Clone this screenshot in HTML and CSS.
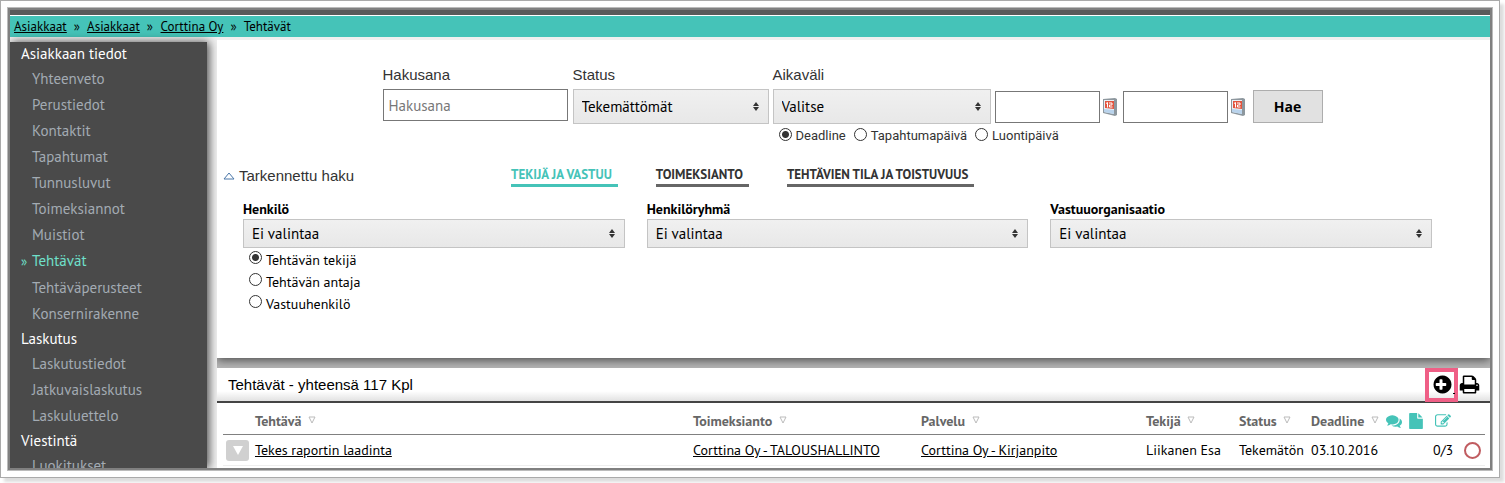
FILE: index.html
```
<!DOCTYPE html>
<html lang="fi">
<head>
    <meta charset="UTF-8">
    <meta name="viewport" content="width=device-width, initial-scale=1.0">
    <title>Tehtävät - Corttina Oy</title>
    <link rel="stylesheet" href="styles.css">
</head>
<body>
    <div class="frame">
        <div class="app">
            <nav class="breadcrumb" aria-label="Murupolku">
                <a href="#">Asiakkaat</a><span>»</span>
                <a href="#">Asiakkaat</a><span>»</span>
                <a href="#">Corttina Oy</a><span>»</span>
                Tehtävät
            </nav>

            <div class="content">
                <nav class="sidebar">
                    <h2>Asiakkaan tiedot</h2>
                    <ul>
                        <li><a href="#">Yhteenveto</a></li>
                        <li><a href="#">Perustiedot</a></li>
                        <li><a href="#">Kontaktit</a></li>
                        <li><a href="#">Tapahtumat</a></li>
                        <li><a href="#">Tunnusluvut</a></li>
                        <li><a href="#">Toimeksiannot</a></li>
                        <li><a href="#">Muistiot</a></li>
                        <li class="active"><a href="#">Tehtävät</a></li>
                        <li><a href="#">Tehtäväperusteet</a></li>
                        <li><a href="#">Konsernirakenne</a></li>
                    </ul>
                    <h2>Laskutus</h2>
                    <ul>
                        <li><a href="#">Laskutustiedot</a></li>
                        <li><a href="#">Jatkuvaislaskutus</a></li>
                        <li><a href="#">Laskuluettelo</a></li>
                    </ul>
                    <h2>Viestintä</h2>
                    <ul>
                        <li><a href="#">Luokitukset</a></li>
                    </ul>
                </nav>

                <main class="main">
                    <form class="filters">
                        <div class="search">
                            <div class="field field-word">
                                <label for="hakusana">Hakusana</label>
                                <input type="text" id="hakusana" placeholder="Hakusana">
                            </div>
                            <div class="field field-status">
                                <label for="status">Status</label>
                                <div class="select">
                                    <select id="status"><option>Tekemättömät</option></select>
                                </div>
                            </div>
                            <div class="field field-range">
                                <label for="aikavali">Aikaväli</label>
                                <div class="select">
                                    <select id="aikavali"><option>Valitse</option></select>
                                </div>
                                <div class="date-type">
                                    <label><input type="radio" name="pvm" checked>Deadline</label>
                                    <label><input type="radio" name="pvm">Tapahtumapäivä</label>
                                    <label><input type="radio" name="pvm">Luontipäivä</label>
                                </div>
                            </div>
                            <div class="dates">
                                <input type="text" aria-label="Alkupäivä">
                                <button type="button" class="calendar" aria-label="Valitse alkupäivä">
                                    <svg width="14" height="18" viewBox="0 0 14 18">
                                        <path d="M0 1l12-1 2 1v16l-2 1-12-3z" fill="#8d979e"/>
                                        <path d="M1 2h10v14L1 14z" fill="#e9f0f6"/>
                                        <path d="M1 11l10 1v4L1 14z" fill="#b9d3ec"/>
                                        <path d="M2 3h9v8l-9-1z" fill="#e2553f"/>
                                        <path d="M3 5.500l1.500-1V9.500M6 5h3v2H6.500v2H9.500" fill="none" stroke="#fff"/>
                                    </svg>
                                </button>
                                <input type="text" aria-label="Loppupäivä">
                                <button type="button" class="calendar" aria-label="Valitse loppupäivä">
                                    <svg width="14" height="18" viewBox="0 0 14 18">
                                        <path d="M0 1l12-1 2 1v16l-2 1-12-3z" fill="#8d979e"/>
                                        <path d="M1 2h10v14L1 14z" fill="#e9f0f6"/>
                                        <path d="M1 11l10 1v4L1 14z" fill="#b9d3ec"/>
                                        <path d="M2 3h9v8l-9-1z" fill="#e2553f"/>
                                        <path d="M3 5.500l1.500-1V9.500M6 5h3v2H6.500v2H9.500" fill="none" stroke="#fff"/>
                                    </svg>
                                </button>
                                <button type="submit" class="submit">Hae</button>
                            </div>
                        </div>

                        <div class="advanced">
                            <button type="button" class="toggle">
                                <svg width="12" height="8" viewBox="0 0 12 8"><path d="M1 7L6 1l5 6z" fill="#fff" stroke="#4a76a8"/></svg>
                                Tarkennettu haku
                            </button>
                            <div class="tabs">
                                <button type="button" class="tab selected">TEKIJÄ JA VASTUU</button>
                                <button type="button" class="tab">TOIMEKSIANTO</button>
                                <button type="button" class="tab">TEHTÄVIEN TILA JA TOISTUVUUS</button>
                            </div>
                        </div>

                        <div class="owners">
                            <div>
                                <label class="owner-label" for="henkilo">Henkilö</label>
                                <div class="select">
                                    <select id="henkilo"><option>Ei valintaa</option></select>
                                </div>
                                <div class="roles">
                                    <label><input type="radio" name="rooli" checked>Tehtävän tekijä</label>
                                    <label><input type="radio" name="rooli">Tehtävän antaja</label>
                                    <label><input type="radio" name="rooli">Vastuuhenkilö</label>
                                </div>
                            </div>
                            <div>
                                <label class="owner-label" for="ryhma">Henkilöryhmä</label>
                                <div class="select">
                                    <select id="ryhma"><option>Ei valintaa</option></select>
                                </div>
                            </div>
                            <div>
                                <label class="owner-label" for="organisaatio">Vastuuorganisaatio</label>
                                <div class="select">
                                    <select id="organisaatio"><option>Ei valintaa</option></select>
                                </div>
                            </div>
                        </div>
                    </form>

                    <section class="tasks">
                        <header class="tasks-head">
                            <h1>Tehtävät - yhteensä 117 Kpl</h1>
                            <a href="#" class="add" aria-label="Lisää tehtävä">
                                <svg width="21" height="21" viewBox="0 0 1792 1792"><path d="M1216 960v-128q0-26-19-45t-45-19h-256v-256q0-26-19-45t-45-19h-128q-26 0-45 19t-19 45v256h-256q-26 0-45 19t-19 45v128q0 26 19 45t45 19h256v256q0 26 19 45t45 19h128q26 0 45-19t19-45v-256h256q26 0 45-19t19-45zm448-64q0 209-103 385.500t-279.500 279.500-385.500 103-385.500-103-279.500-279.500-103-385.500 103-385.500 279.500-279.500 385.500-103 385.500 103 279.500 279.500 103 385.500z"/></svg>
                                <span></span>
                            </a>
                            <a href="#" class="print" aria-label="Tulosta">
                                <svg width="21" height="21" viewBox="0 0 1792 1792"><path d="M448 1536h896v-256h-896v256zm0-640h896v-384h-160q-40 0-68-28t-28-68v-160h-640v640zm1152 64q0-26-19-45t-45-19-45 19-19 45 19 45 45 19 45-19 19-45zm128 0v416q0 13-9.500 22.500t-22.500 9.500h-224v160q0 40-28 68t-68 28h-960q-40 0-68-28t-28-68v-160h-224q-13 0-22.500-9.500t-9.500-22.500v-416q0-79 56.500-135.500t135.500-56.500h64v-544q0-40 28-68t68-28h672q40 0 88 20t76 48l152 152q28 28 48 76t20 88v256h64q79 0 135.500 56.500t56.500 135.500z"/></svg>
                            </a>
                        </header>

                        <table>
                            <colgroup>
                                <col class="c-open"><col><col class="c-order"><col class="c-service"><col class="c-author"><col class="c-status"><col class="c-deadline"><col class="c-chat"><col class="c-file"><col class="c-edit"><col class="c-state">
                            </colgroup>
                            <thead>
                                <tr>
                                    <th></th>
                                    <th>Tehtävä <svg class="sort" viewBox="0 0 8 8"><path d="M1 1h6L4 7z"/></svg></th>
                                    <th>Toimeksianto <svg class="sort" viewBox="0 0 8 8"><path d="M1 1h6L4 7z"/></svg></th>
                                    <th>Palvelu <svg class="sort" viewBox="0 0 8 8"><path d="M1 1h6L4 7z"/></svg></th>
                                    <th>Tekijä <svg class="sort" viewBox="0 0 8 8"><path d="M1 1h6L4 7z"/></svg></th>
                                    <th>Status <svg class="sort" viewBox="0 0 8 8"><path d="M1 1h6L4 7z"/></svg></th>
                                    <th>Deadline <svg class="sort" viewBox="0 0 8 8"><path d="M1 1h6L4 7z"/></svg></th>
                                    <th><svg class="icon" viewBox="0 0 1792 1792"><path d="M1408 768q0 139-94 257t-256.500 186.500-353.500 68.500q-86 0-176-16-124 88-278 128-36 9-86 16h-3q-11 0-20.500-8t-11.500-21q-1-3-1-6.500t.5-6.500 2-6l2.500-5 3.500-5.500 4-5 4.500-5 4-4.500q5-6 23-25t26-29.500 22.500-29 25-38.500 20.500-44q-124-72-195-177t-71-224q0-139 94-257t256.500-186.500 353.500-68.500 353.500 68.500 256.500 186.500 94 257zm384 256q0 120-71 224.500t-195 176.500q10 24 20.500 44t25 38.500 22.500 29 26 29.500 23 25q1 1 4 4.500t4.500 5 4 5 3.500 5.500l2.500 5 2 6 .5 6.500-1 6.500q-3 14-13 22t-22 7q-50-7-86-16-154-40-278-128-90 16-176 16-271 0-472-132 58 4 88 4 161 0 309-45t264-129q125-92 192-212t67-254q0-77-23-152 129 71 204 178t75 230z"/></svg></th>
                                    <th><svg class="icon" viewBox="0 0 1792 1792"><path d="M1152 512v-472q22 14 36 28l408 408q14 14 28 36h-472zm-128 32q0 40 28 68t68 28h544v1056q0 40-28 68t-68 28h-1344q-40 0-68-28t-28-68v-1600q0-40 28-68t68-28h800v544z"/></svg></th>
                                    <th><svg class="icon icon-edit" viewBox="0 0 1792 1792"><path d="M888 1184l116-116-152-152-116 116v56h96v96h56zm440-720q-16-16-33 1l-350 350q-17 17-1 33t33-1l350-350q17-17 1-33zm80 594v190q0 119-84.500 203.500t-203.500 84.500h-832q-119 0-203.500-84.500t-84.500-203.500v-832q0-119 84.500-203.500t203.500-84.500h832q63 0 117 25 15 7 18 23 3 17-9 29l-49 49q-14 14-32 8-23-6-45-6h-832q-66 0-113 47t-47 113v832q0 66 47 113t113 47h832q66 0 113-47t47-113v-126q0-13 9-22l64-64q15-15 35-7t20 29zm-96-738l288 288-672 672h-288v-288zm444 132l-92 92-288-288 92-92q28-28 68-28t68 28l152 152q28 28 28 68t-28 68z"/></svg></th>
                                    <th></th>
                                </tr>
                            </thead>
                            <tbody>
                                <tr>
                                    <td><button type="button" class="open" aria-label="Avaa"><svg width="10" height="9" viewBox="0 0 10 9"><path d="M0 0h10L5 9z" fill="#fff"/></svg></button></td>
                                    <td><a href="#">Tekes raportin laadinta</a></td>
                                    <td><a href="#">Corttina Oy - TALOUSHALLINTO</a></td>
                                    <td><a href="#">Corttina Oy - Kirjanpito</a></td>
                                    <td>Liikanen Esa</td>
                                    <td>Tekemätön</td>
                                    <td>03.10.2016</td>
                                    <td></td>
                                    <td></td>
                                    <td class="count">0/3</td>
                                    <td><span class="state"></span></td>
                                </tr>
                            </tbody>
                        </table>
                    </section>
                </main>
            </div>
        </div>
    </div>
</body>
</html>
```
FILE: styles.css
```
* {
    box-sizing: border-box;
}
body {
    margin: 0;
    padding: 0 5px 5px 0;
    height: 100vh;
    background-color: #fff;
    color: #000;
    font-family: "PT Sans", Lato, sans-serif;
    font-size: 14px;
    overflow: hidden;
}
input, select, button {
    font-family: inherit;
    color: inherit;
    margin: 0;
}
a {
    color: inherit;
}

/* kehys */
.frame {
    height: 100%;
    padding: 7px;
    border: 1px solid #aaa;
    background-color: #fff;
    box-shadow: 4px 4px 3px #ddd;
}
.app {
    height: 100%;
    display: flex;
    flex-direction: column;
    border: 2px solid #808080;
    box-shadow: 0 0 0 1px #bbb;
    overflow: hidden;
}
.breadcrumb {
    flex: none;
    border-top: 5px solid #5a5a5a;
    box-shadow: inset 0 1px #fff;
    background-color: #45c3b8;
    padding: 2px 4px 0;
    height: 27px;
    font-size: 13px;
    line-height: 20px;
}
.breadcrumb span {
    margin: 0 4px 0 7px;
}
.content {
    flex: 1;
    min-height: 0;
    display: flex;
    background-color: #f0f0f0;
}

/* sivuvalikko */
.sidebar {
    flex: none;
    width: 197px;
    margin: 5px 10px 0 0;
    background-color: #4a4a4a;
    box-shadow: 2px 0 9px rgba(0, 0, 0, 0.7);
}
.sidebar h2 {
    margin: 0;
    padding-left: 11px;
    font-size: 15px;
    font-weight: normal;
    line-height: 24px;
    color: #fff;
}
.sidebar ul {
    list-style: none;
    margin: 0;
    padding: 0 0 0 22px;
}
.sidebar li {
    font-size: 15px;
    line-height: 26px;
    color: #a3abb3;
}
.sidebar a {
    text-decoration: none;
}
.sidebar .active {
    color: #6fe0cb;
    margin-left: -11px;
}
.sidebar .active::before {
    content: "»";
    display: inline-block;
    width: 11px;
    font-size: 13px;
}

/* haku */
.main {
    flex: 1;
    min-width: 0;
    border-top: 3px solid #f0f0f0;
    background-color: #b5b5b5;
    overflow: hidden;
}
.filters {
    height: 318px;
    padding-top: 25px;
    background-color: #fff;
    box-shadow: 0 2px 9px rgba(0, 0, 0, 0.6);
}
.search {
    display: flex;
    justify-content: center;
    gap: 4px;
    padding-right: 2px;
    color: #333;
}
.field > label {
    display: block;
    font: 15px/20px "Liberation Sans", Arial, sans-serif;
    margin-bottom: 4px;
}
.field-word {
    width: 186px;
}
.field-status {
    width: 196px;
}
.field-range {
    width: 218px;
}
input[type="text"] {
    width: 100%;
    height: 32px;
    padding: 0 5px;
    border: 1px solid #777;
    background-color: #fff;
    font-size: 15px;
}
.field-word input {
    width: 185px;
}
input::placeholder {
    color: #777;
    opacity: 1;
}
.select {
    position: relative;
}
.select select {
    display: block;
    appearance: none;
    width: 100%;
    height: 35px;
    padding: 0 8px 1px;
    border: 1px solid #c4c4c4;
    border-radius: 0;
    background: linear-gradient(#f0f0f0, #e8e8e8);
    color: #000;
    font-size: 15px;
}
.select::before, .select::after {
    content: "";
    position: absolute;
    right: 10px;
    border: 3px solid transparent;
}
.select::before {
    bottom: 50%;
    border-top: 0;
    border-bottom: 4px solid #333;
    margin-bottom: 1px;
}
.select::after {
    top: 50%;
    border-bottom: 0;
    border-top: 4px solid #333;
}
.date-type {
    display: flex;
    gap: 8px;
    padding: 2px 0 0 6px;
    white-space: nowrap;
    font: 13px/20px Roboto, sans-serif;
}
.date-type label, .roles label {
    display: flex;
    gap: 4px;
}
input[type="radio"] {
    flex: none;
    appearance: none;
    width: 13px;
    height: 13px;
    margin-top: 2px;
    border: 1px solid #333;
    border-radius: 50%;
    background-color: #fff;
}
input[type="radio"]:checked {
    background: radial-gradient(circle, #333 3px, #fff 4px);
}
.dates {
    display: flex;
    align-items: center;
    height: 33px;
    margin-top: 25px;
}
.dates input[type="text"] {
    width: 105px;
}
.calendar {
    display: flex;
    padding: 0 6px 0 3px;
    border: 0;
    background: none;
}
.submit {
    width: 70px;
    height: 33px;
    margin-left: 2px;
    border: 1px solid #adadad;
    background-color: #e1e1e1;
    color: #000;
    font: bold 14px "Open Sans", sans-serif;
}
.advanced {
    display: flex;
    align-items: flex-start;
    margin-top: 20px;
    padding-left: 6px;
}
.toggle {
    display: flex;
    align-items: center;
    gap: 4px;
    width: 288px;
    padding: 0;
    border: 0;
    background: none;
    color: #333;
    font: 15px/20px "Liberation Sans", Arial, sans-serif;
}
.tabs {
    display: flex;
    gap: 38px;
}
.tab {
    padding: 0 6px 0 0;
    border: 0;
    border-bottom: 3px solid #666;
    background: none;
    color: #333;
    font-size: 13px;
    font-weight: bold;
    line-height: 18px;
}
.tab.selected {
    color: #45c3b8;
    border-color: #45c3b8;
}
.owners {
    display: grid;
    grid-template-columns: repeat(3, 1fr);
    gap: 22px;
    padding: 13px 58px 0 26px;
}
.owner-label {
    display: block;
    font-size: 14px;
    font-weight: bold;
    line-height: 18px;
    margin-bottom: 1px;
}
.owners select {
    height: 29px;
    padding-bottom: 0;
}
.roles {
    padding: 1px 0 0 6px;
    line-height: 22px;
}

/* tehtävälista */
.tasks {
    position: relative;
    height: 100%;
    margin-top: 10px;
    background-color: #fff;
}
.tasks-head {
    display: flex;
    align-items: center;
    height: 35px;
    padding: 0 10px 0 11px;
    border-bottom: 2px solid #444;
    background: linear-gradient(#fff 70%, #e2e2e2);
}
.tasks-head h1 {
    flex: 1;
    margin: 0;
    font: 15px "Liberation Sans", Arial, sans-serif;
}
.add {
    display: flex;
    align-items: center;
    height: 34px;
    padding-left: 3px;
    border: 4px solid #ef5f86;
}
.add span {
    width: 2px;
    height: 19px;
    margin-right: -1px;
    border-bottom: 1px solid #000;
}
.print {
    display: flex;
    margin-left: 1px;
}
table {
    width: calc(100% - 11px);
    margin-left: 6px;
    table-layout: fixed;
    border-collapse: collapse;
    white-space: nowrap;
}
.c-open { width: 32px; }
.c-order { width: 228px; }
.c-service { width: 225px; }
.c-author { width: 93px; }
.c-status { width: 72px; }
.c-deadline { width: 75px; }
.c-chat { width: 22px; }
.c-file { width: 24px; }
.c-edit { width: 29px; }
.c-state { width: 24px; }
th, td {
    height: 31px;
    padding: 0;
    text-align: left;
}
th {
    padding-top: 6px;
    border-bottom: 1px solid #808080;
    color: #666;
}
td {
    padding-top: 1px;
    border-bottom: 1px solid #eee;
}
.count {
    padding-left: 1px;
}
.sort {
    width: 8px;
    height: 8px;
    margin: 0 0 2px 3px;
    fill: none;
    stroke: #bbb;
}
.icon {
    display: block;
    width: 16px;
    height: 16px;
    fill: #45c3b8;
}
.icon-edit {
    margin-left: 3px;
}
.open {
    display: flex;
    align-items: center;
    justify-content: center;
    width: 23px;
    height: 21px;
    margin-left: 3px;
    padding: 0;
    border: 0;
    border-radius: 3px;
    background-color: #d0d0d0;
}
.state {
    display: block;
    width: 17px;
    height: 17px;
    margin-left: 3px;
    border: 2px solid #c05c60;
    border-radius: 50%;
}
```
